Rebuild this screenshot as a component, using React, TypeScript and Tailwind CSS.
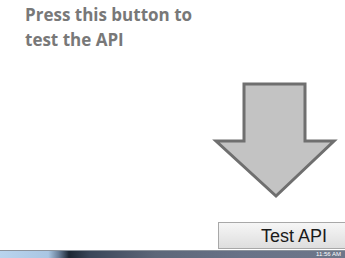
export default function App() {
  return (
    <div className="w-[345px] h-[258px] bg-white flex flex-col overflow-hidden">
      <div className="flex-1 flex flex-col">
        <p
          className="pl-[25px] pt-[2px] text-[17px] leading-[25px] font-bold text-[#787878]"
          style={{ fontFamily: '"Open Sans", sans-serif' }}
        >
          Press this button to
          <br />
          test the API
        </p>
        <div className="flex justify-end pr-[6px] mt-[30px]">
          <svg width="127" height="118" viewBox="0 0 127 118">
            <path
              d="M32 2 H93 V59 H122 L64 114 L4 59 H32 Z"
              fill="#c3c3c3"
              stroke="#6f6f6f"
              strokeWidth="3"
              strokeLinejoin="miter"
            />
          </svg>
        </div>
        <div className="flex justify-end mt-auto mb-[1px]">
          <button
            className="w-[127px] h-[27px] border border-[#a8a8a8] border-r-0 bg-gradient-to-b from-[#f6f6f6] to-[#dedede] text-[18px] text-[#1a1a1a] pl-[24px] leading-none"
            style={{ fontFamily: '"Liberation Sans", Arial, sans-serif' }}
          >
            Test API
          </button>
        </div>
      </div>
      <div className="h-[8px] border-t border-[#8c939c] bg-[linear-gradient(to_right,#b9d4ee_0%,#a9c6e3_14%,#6a7f99_17%,#1c2633_20%,#3a4659_26%,#5d6779_45%,#687287_70%,#6e778a_100%)] relative">
        <span
          className="absolute right-[4px] top-0 text-[6px] leading-[7px] text-white"
          style={{ fontFamily: '"Liberation Sans", Arial, sans-serif' }}
        >
          11:56 AM
        </span>
      </div>
    </div>
  );
}
